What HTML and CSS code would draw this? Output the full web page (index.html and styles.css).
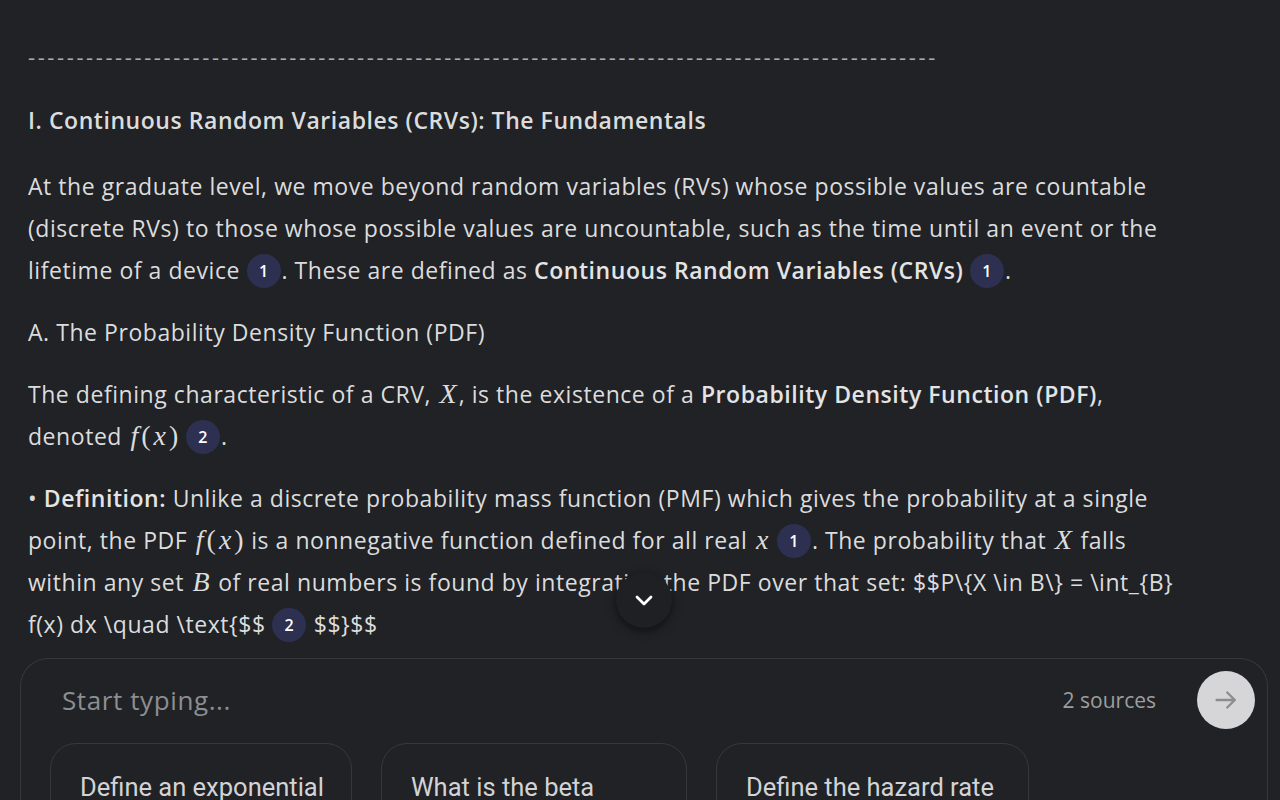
FILE: index.html
```html
<!DOCTYPE html>
<html lang="en">
<head>
<meta charset="utf-8">
<title>Notebook chat</title>
<link rel="stylesheet" href="styles.css">
</head>
<body>
<div class="page">
  <main class="scroll">
    <div class="content">
      <p class="rule">------------------------------------------------------------------------------------------------------------------------------------------------------------------</p>
      <p class="heading">I. Continuous Random Variables (CRVs): The Fundamentals</p>
      <p>At the graduate level, we move beyond random variables (RVs) whose possible values are countable (discrete RVs) to those whose possible values are uncountable, such as the time until an event or the lifetime of a device <span class="nw"><span class="cite">1</span>.</span> These are defined as <b>Continuous Random Variables (CRVs)</b> <span class="nw"><span class="cite">1</span>.</span></p>
      <p>A. The Probability Density Function (PDF)</p>
      <p>The defining characteristic of a CRV, <span class="math">X</span>, is the existence of a <b>Probability Density Function (PDF)</b>, denoted <span class="nw"><span class="math">f</span><span class="mathn">(</span><span class="math">x</span><span class="mathn">)</span> <span class="cite">2</span>.</span></p>
      <p>• <b>Definition:</b> Unlike a discrete probability mass function (PMF) which gives the probability at a single point, the PDF <span class="nw"><span class="math">f</span><span class="mathn">(</span><span class="math">x</span><span class="mathn">)</span></span> is a nonnegative function defined for all real <span class="nw"><span class="math">x</span> <span class="cite">1</span>.</span> The probability that <span class="math">X</span> falls within any set <span class="math">B</span> of real numbers is found by integrating the PDF over that set: $$P\{X \in B\} = \int_{B} f(x) dx \quad \text{$$ <span class="cite">2</span> $$}$$</p>
    </div>
    <button class="scroll-down" aria-label="Scroll down">
      <svg width="24" height="24" viewBox="0 0 24 24"><path d="M5 9l7 7 7-7" fill="none" stroke="#ffffff" stroke-width="2.8" stroke-linecap="round" stroke-linejoin="round"/></svg>
    </button>
  </main>
  <section class="composer">
    <div class="input-row">
      <span class="placeholder">Start typing...</span>
      <span class="sources">2 sources</span>
      <button class="send" aria-label="Send">
        <svg width="30" height="30" viewBox="0 0 24 24"><path d="M4.5 12h14.5M13 6l6 6-6 6" fill="none" stroke="#8c8c8e" stroke-width="1.9" stroke-linecap="round" stroke-linejoin="round"/></svg>
      </button>
    </div>
    <div class="chips">
      <div class="chip chip-a">Define an exponential distribution.</div>
      <div class="chip chip-b">What is the beta distribution used for?</div>
      <div class="chip chip-c">Define the hazard rate function.</div>
    </div>
  </section>
</div>
</body>
</html>
```

FILE: styles.css
```css
html, body {
  margin: 0;
  padding: 0;
  background: #202226;
  height: 100%;
  overflow: hidden;
}
.page {
  height: 800px;
  display: flex;
  flex-direction: column;
  font-family: "Open Sans", "Noto Sans", sans-serif;
  color: #dcdcdd;
}
.scroll {
  position: relative;
  flex: 0 0 658px;
  overflow: hidden;
}
.content {
  padding: 35px 105px 0 28px;
  font-size: 23px;
  letter-spacing: 0.55px;
  line-height: 42px;
}
.content p {
  margin: 0 0 20px;
}
.content b {
  font-weight: 600;
  color: #e4e4e5;
}
.nw {
  white-space: nowrap;
}
.rule {
  width: 910px;
  height: 42px;
  overflow: hidden;
  white-space: nowrap;
  font-size: 22px;
  letter-spacing: 2.6px;
  color: #a9aaac;
  margin-bottom: 22px !important;
}
.heading {
  font-weight: 600;
  margin-bottom: 24px !important;
}
.cite {
  display: inline-flex;
  align-items: center;
  justify-content: center;
  width: 34px;
  height: 34px;
  border-radius: 50%;
  background: #2d3050;
  color: #ffffff;
  font-size: 16px;
  font-weight: 600;
  letter-spacing: 0;
  line-height: 1;
  vertical-align: middle;
  margin: -4px 1px 0 0;
}
.math {
  font-family: "Liberation Serif", "DejaVu Serif", serif;
  font-style: italic;
  font-size: 28px;
  line-height: 1;
  letter-spacing: 0;
  padding: 0 2px;
}
.mathn {
  font-family: "Liberation Serif", "DejaVu Serif", serif;
  font-size: 28px;
  line-height: 1;
  letter-spacing: 0;
  padding: 0 1px;
}
.scroll-down {
  position: absolute;
  left: 616px;
  top: 572px;
  width: 56px;
  height: 56px;
  border-radius: 50%;
  border: none;
  background: #1f2023;
  box-shadow: 0 3px 10px rgba(0, 0, 0, 0.55);
  display: flex;
  align-items: center;
  justify-content: center;
  padding: 0;
}
.composer {
  margin: 0 12px 0 20px;
  border: 1.5px solid #36383c;
  border-bottom: none;
  border-radius: 28px 28px 0 0;
  flex: 1;
  display: flex;
  flex-direction: column;
}
.input-row {
  display: flex;
  align-items: center;
  height: 82px;
  padding: 0 12px 0 41px;
}
.placeholder {
  flex: 1;
  font-size: 26px;
  letter-spacing: 0.6px;
  color: #8d8e91;
}
.sources {
  font-size: 21px;
  color: #9d9ea0;
  margin-right: 41px;
}
.send {
  width: 58px;
  height: 58px;
  border-radius: 50%;
  border: none;
  background: #d6d6d8;
  display: flex;
  align-items: center;
  justify-content: center;
  padding: 0;
}
.chips {
  display: flex;
  gap: 29px;
  padding: 2px 0 0 29px;
}
.chip {
  box-sizing: border-box;
  height: 110px;
  border: 1.5px solid #36383c;
  border-radius: 26px;
  padding: 27px 20px 0 29px;
  font-family: Roboto, "Liberation Sans", sans-serif;
  font-size: 25.5px;
  line-height: 32px;
  color: #d2d3d5;
}
.chip-a { width: 302px; }
.chip-b { width: 306px; }
.chip-c { width: 313px; }
```
